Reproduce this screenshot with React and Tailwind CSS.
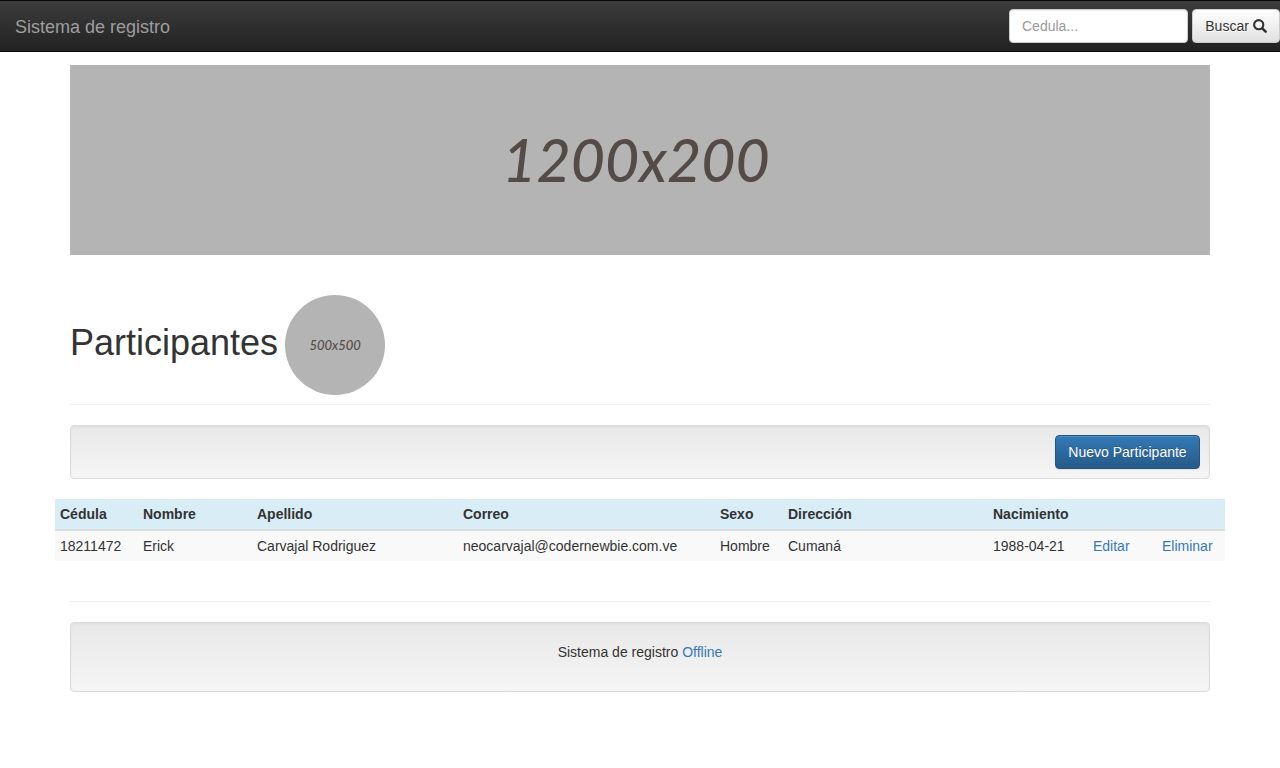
import React from "react";

function SearchIcon() {
  return (
    <svg
      viewBox="0 0 14 14"
      className="inline-block h-3.5 w-3.5 align-[-2px]"
      fill="none"
      stroke="currentColor"
      aria-hidden="true"
    >
      <circle cx="5.7" cy="5.7" r="4.6" strokeWidth="2.1" />
      <path d="M9.3 9.3 L12.6 12.6" strokeWidth="2.6" strokeLinecap="round" />
    </svg>
  );
}

function Navbar() {
  return (
    <nav className="flex items-center justify-between border-y border-[#080808] bg-linear-to-b from-[#3c3c3c] to-[#222222] py-2">
      <a href="#" className="pt-0.5 pl-[15px] text-lg/5 text-[#9d9d9d]">
        Sistema de registro
      </a>
      <form className="flex gap-1" onSubmit={(e) => e.preventDefault()}>
        <input
          type="text"
          aria-label="Cedula"
          placeholder="Cedula..."
          className="h-[34px] w-[179px] rounded border border-[#cccccc] bg-white px-3 text-[#555555] shadow-[inset_0_1px_1px_rgba(0,0,0,0.075)] placeholder:text-[#999999]"
        />
        <button
          type="submit"
          className="h-[34px] w-[88px] rounded border border-[#cccccc] bg-linear-to-b from-white to-[#e0e0e0] whitespace-nowrap text-[#333333] [text-shadow:0_1px_0_#fff]"
        >
          Buscar <SearchIcon />
        </button>
      </form>
    </nav>
  );
}

function Well({ className, children }) {
  return (
    <div
      className={`rounded border border-[#dcdcdc] bg-linear-to-b from-[#e8e8e8] to-[#f5f5f5] shadow-[inset_0_1px_3px_rgba(0,0,0,0.05),0_1px_0_rgba(255,255,255,0.1)] ${className}`}
    >
      {children}
    </div>
  );
}

const columns = [
  { label: "Cédula", width: "w-[83px]" },
  { label: "Nombre", width: "w-[114px]" },
  { label: "Apellido", width: "w-[206px]" },
  { label: "Correo", width: "w-[257px]" },
  { label: "Sexo", width: "w-[68px]" },
  { label: "Dirección", width: "w-[205px]" },
  { label: "Nacimiento", width: "w-[100px]" },
  { label: "", width: "w-[69px]" },
  { label: "", width: "w-[68px]" },
];

const participants = [
  [
    "18211472",
    "Erick",
    "Carvajal Rodriguez",
    "neocarvajal@codernewbie.com.ve",
    "Hombre",
    "Cumaná",
    "1988-04-21",
  ],
];

function ParticipantsTable() {
  return (
    <div className="-mx-[15px] mt-5">
      <table className="w-full table-fixed border-separate border-spacing-0 text-left">
        <thead className="bg-[#d9edf7]">
          <tr>
            {columns.map((column, i) => (
              <th
                key={i}
                scope="col"
                className={`border-b-2 border-[#dddddd] p-[5px] font-bold ${column.width}`}
              >
                {column.label}
              </th>
            ))}
          </tr>
        </thead>
        <tbody>
          {participants.map((row) => (
            <tr key={row[0]} className="bg-[#f9f9f9]">
              {row.map((cell) => (
                <td key={cell} className="p-[5px]">
                  {cell}
                </td>
              ))}
              <td className="p-[5px]">
                <a href="#editar" className="text-[#337ab7]">
                  Editar
                </a>
              </td>
              <td className="p-[5px]">
                <a href="#eliminar" className="text-[#337ab7]">
                  Eliminar
                </a>
              </td>
            </tr>
          ))}
        </tbody>
      </table>
    </div>
  );
}

export default function App() {
  return (
    <div className="bg-white font-['Liberation_Sans',Arial,sans-serif] text-sm/5 text-[#333333]">
      <Navbar />
      <div className="mx-auto max-w-[1170px] px-[15px] pt-[13px] pb-5">
        <div className="flex aspect-[6/1] items-center justify-center bg-[#b4b4b4] pr-2 font-[Lato,sans-serif] text-[59px] font-medium text-[#534b48] italic">
          1200x200
        </div>

        <header className="mt-10 flex items-center gap-[7px] border-b border-[#eeeeee] pb-[9px]">
          <h1 className="pb-1 text-4xl/10">Participantes</h1>
          <div className="flex size-[100px] items-center justify-center rounded-full bg-[#b4b4b4] font-[Lato,sans-serif] text-[13px] font-medium text-[#534b48] italic">
            500x500
          </div>
        </header>

        <Well className="mt-5 flex justify-end p-[9px]">
          <button
            type="button"
            className="h-[34px] w-[145px] rounded border border-[#245580] bg-linear-to-b from-[#337ab7] to-[#265a88] text-white shadow-[inset_0_1px_0_rgba(255,255,255,0.15),0_1px_1px_rgba(0,0,0,0.075)] [text-shadow:0_-1px_0_rgba(0,0,0,0.2)]"
          >
            Nuevo Participante
          </button>
        </Well>

        <ParticipantsTable />

        <hr className="mt-10 border-[#eeeeee]" />

        <footer className="mt-5">
          <Well className="px-[19px] pt-[19px] pb-[29px] text-center">
            <p>
              Sistema de registro{" "}
              <a href="#offline" className="text-[#337ab7]">
                Offline
              </a>
            </p>
          </Well>
        </footer>
      </div>
    </div>
  );
}
